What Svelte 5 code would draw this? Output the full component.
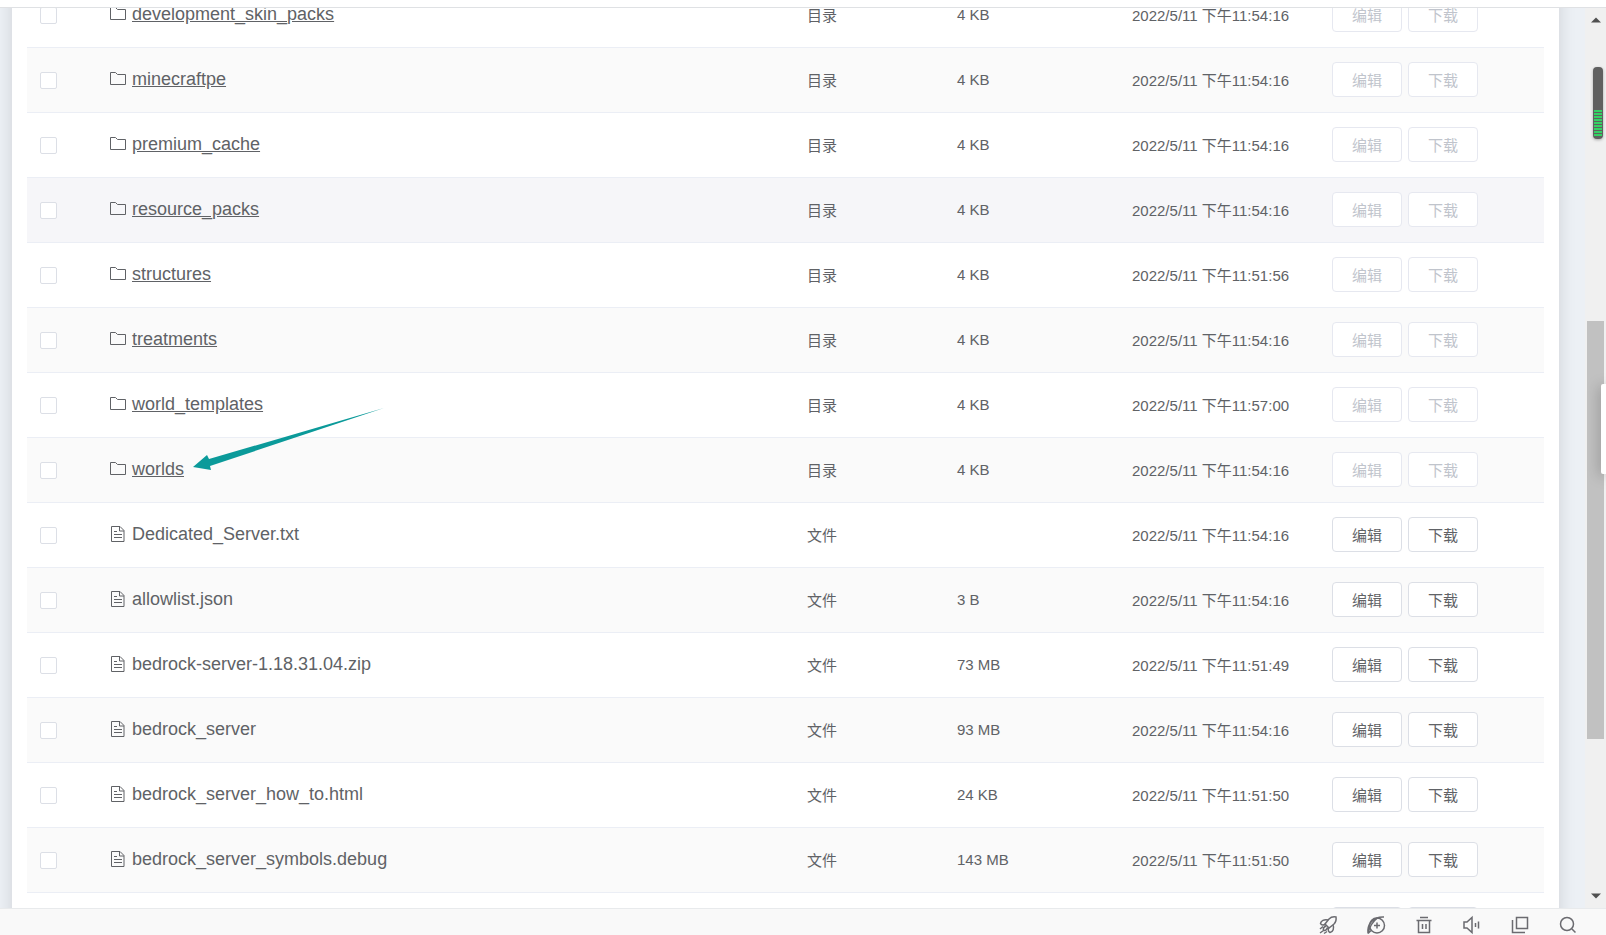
<script>
  const files = [
    { name: 'development_skin_packs', dir: true, size: '4 KB', time: '2022/5/11 下午11:54:16' },
    { name: 'minecraftpe', dir: true, size: '4 KB', time: '2022/5/11 下午11:54:16' },
    { name: 'premium_cache', dir: true, size: '4 KB', time: '2022/5/11 下午11:54:16' },
    { name: 'resource_packs', dir: true, size: '4 KB', time: '2022/5/11 下午11:54:16', active: true },
    { name: 'structures', dir: true, size: '4 KB', time: '2022/5/11 下午11:51:56' },
    { name: 'treatments', dir: true, size: '4 KB', time: '2022/5/11 下午11:54:16' },
    { name: 'world_templates', dir: true, size: '4 KB', time: '2022/5/11 下午11:57:00' },
    { name: 'worlds', dir: true, size: '4 KB', time: '2022/5/11 下午11:54:16' },
    { name: 'Dedicated_Server.txt', size: '', time: '2022/5/11 下午11:54:16' },
    { name: 'allowlist.json', size: '3 B', time: '2022/5/11 下午11:54:16' },
    { name: 'bedrock-server-1.18.31.04.zip', size: '73 MB', time: '2022/5/11 下午11:51:49' },
    { name: 'bedrock_server', size: '93 MB', time: '2022/5/11 下午11:54:16' },
    { name: 'bedrock_server_how_to.html', size: '24 KB', time: '2022/5/11 下午11:51:50' },
    { name: 'bedrock_server_symbols.debug', size: '143 MB', time: '2022/5/11 下午11:51:50' },
    { name: '', size: '', time: '' }
  ];

  let selected = $state([]);
</script>

<div class="window">
  <div class="tabstrip"></div>

  <div class="view">
    <main>
      <div class="card">
        <table>
          <colgroup>
            <col class="c-check" />
            <col />
            <col class="c-type" />
            <col class="c-size" />
            <col class="c-time" />
            <col class="c-ops" />
          </colgroup>
          <tbody>
            {#each files as file}
              <tr class:active={file.active}>
                <td>
                  <input type="checkbox" value={file.name} bind:group={selected} aria-label={file.name || 'file'} />
                </td>
                <td>
                  {#if file.name}
                    <div class="name">
                      {#if file.dir}
                        <svg width="16" height="16" viewBox="0 0 16 16">
                          <path d="M.5 1.500h5l2 2h8v10H.5z" />
                        </svg>
                        <a href="#{file.name}">{file.name}</a>
                      {:else}
                        <svg width="16" height="16" viewBox="0 0 16 16">
                          <path d="M1.500 .5h8.500l4 4v11H1.500zM9.500 .5v4.500H14M4 5.500h3M4 8.500h8M4 11.500h8" />
                        </svg>
                        <span>{file.name}</span>
                      {/if}
                    </div>
                  {/if}
                </td>
                <td>{file.name ? (file.dir ? '目录' : '文件') : ''}</td>
                <td>{file.size}</td>
                <td>{file.time}</td>
                <td>
                  <div class="ops">
                    <button disabled={file.dir} aria-label="编辑">{file.name ? '编辑' : ''}</button>
                    <button disabled={file.dir} aria-label="下载">{file.name ? '下载' : ''}</button>
                  </div>
                </td>
              </tr>
            {/each}
          </tbody>
        </table>
      </div>
    </main>

    <div class="scrollbar">
      <svg width="10" height="6" viewBox="0 0 10 6"><path d="M0 5.500 5 .5l5 5z" /></svg>
      <div class="track"><div class="thumb"></div></div>
      <svg width="10" height="6" viewBox="0 0 10 6"><path d="M0 .5h10l-5 5z" /></svg>
    </div>
  </div>

  <footer>
    <button aria-label="加速">
      <svg width="20" height="20" viewBox="0 0 20 20">
        <path d="M18 2c-3-.5-5 0-7 2L7 9l4 4 5-4c2-2 2.500-4 2-7z" />
        <path d="M10 5C6 4 3 6 2.500 8.500 3.500 11 6 10 7.500 9.500M15 10c1.500 3 0 7-3 7.500-2-1-2-3-1.500-5M8 11c-2 1-3 3-2.500 4.500C8 16 9 14 9.500 12.500M2 14l3-2.500M2 18l3.500-2.500M6 18.500l3-2" />
      </svg>
    </button>
    <button aria-label="浏览器">
      <svg width="20" height="20" viewBox="0 0 20 20">
        <circle cx="11" cy="10.500" r="7.500" />
        <path d="M2 18.500C1 9 7 1.500 18 2M2 18.500c1-5 3.500-11 9.500-15.500M2 18.500l3-3M11 7.500v6M8 10.500h6" />
      </svg>
    </button>
    <button aria-label="清除">
      <svg width="20" height="20" viewBox="0 0 20 20">
        <path d="M6 2.500h8M2.500 5.500h15M4.500 5.500v12h11v-12M8.500 9v5M12 9v5" />
      </svg>
    </button>
    <button aria-label="声音">
      <svg width="20" height="20" viewBox="0 0 20 20">
        <path d="M2 7v6h3l5 4.500v-15L5 7zM13.500 8v4M16.500 6.500v7" />
      </svg>
    </button>
    <button aria-label="窗口">
      <svg width="20" height="20" viewBox="0 0 20 20">
        <path d="M6.500 2.500h11v11h-11zM2.500 5v12.500H15" />
      </svg>
    </button>
    <button aria-label="搜索">
      <svg width="20" height="20" viewBox="0 0 20 20">
        <circle cx="9" cy="9" r="6.500" />
        <path d="m14 14 3.500 3.500" />
      </svg>
    </button>
  </footer>

  <svg class="arrow" width="192" height="64" viewBox="0 0 192 64">
    <path d="M0 60 14 48l2 4L191 1 17 59l1 4z" />
  </svg>

  <div class="meter"><div class="level"></div></div>
  <div class="drawer"></div>
</div>

<style>
  :global(body) {
    margin: 0;
    overflow: hidden;
  }
  .window {
    position: relative;
    display: flex;
    flex-direction: column;
    height: 100vh;
    overflow: hidden;
    font-family: 'Liberation Sans', 'Noto Sans CJK SC', sans-serif;
    font-size: 15px;
    color: #606266;
  }
  svg {
    flex: none;
    fill: none;
    stroke: #606266;
  }
  .tabstrip {
    height: 7px;
    background: #fff;
    border-bottom: 1px solid #dfe1e4;
  }
  .view {
    display: flex;
    flex: 1;
    min-height: 0;
  }
  main {
    flex: 1;
    padding: 0 26px 0 12px;
    overflow: hidden;
    background: #ecf0f5;
  }
  .card {
    padding: 0 15px;
    /* the list is scrolled partway into its first row */
    margin-top: -25px;
    background: #fff;
    box-shadow: 0 0 16px rgba(0, 0, 0, 0.13);
  }
  table {
    width: 100%;
    table-layout: fixed;
    border-collapse: separate;
    border-spacing: 0;
  }
  .c-check {
    width: 70px;
  }
  .c-type {
    width: 150px;
  }
  .c-size {
    width: 175px;
  }
  .c-time {
    width: 200px;
  }
  .c-ops {
    width: 225px;
  }
  td {
    box-sizing: border-box;
    height: 65px;
    padding: 0 13px;
    border-bottom: 1px solid #ebeef5;
    white-space: nowrap;
  }
  td + td {
    padding-bottom: 2px;
  }
  tr:nth-child(even) td {
    background: #fafafa;
  }
  tr.active td {
    background: #f6f6f9;
  }
  input {
    appearance: none;
    display: block;
    width: 17px;
    height: 17px;
    margin: 0;
    background: #fff;
    border: 1px solid #dcdfe6;
    border-radius: 2px;
  }
  input:checked {
    background: #409eff;
  }
  .name {
    display: flex;
    align-items: center;
    gap: 6px;
    font-size: 18px;
  }
  .name a {
    color: inherit;
  }
  .ops {
    display: flex;
    gap: 6px;
  }
  .ops button {
    width: 70px;
    height: 35px;
    padding: 0;
    font: inherit;
    color: #606266;
    background: #fff;
    border: 1px solid #dcdfe6;
    border-radius: 4px;
  }
  .ops button:disabled {
    color: #c0c4cc;
    border-color: #e6e8f0;
  }
  .scrollbar {
    display: flex;
    flex-direction: column;
    align-items: center;
    justify-content: space-between;
    width: 21px;
    padding: 9px 0;
    box-sizing: border-box;
    background: #f0f0f0;
  }
  .scrollbar svg {
    fill: #505050;
    stroke: none;
  }
  .track {
    flex: 1;
    width: 17px;
  }
  .thumb {
    height: 48%;
    margin-top: 298px;
    background: #c1c1c1;
  }
  footer {
    display: flex;
    justify-content: flex-end;
    gap: 28px;
    height: 26px;
    padding: 0 28px 0 0;
    background: #f9f9f9;
    border-top: 1px solid #e8eaec;
  }
  footer button {
    padding: 5px 0 0;
    height: 26px;
    background: none;
    border: none;
  }
  footer svg {
    display: block;
    stroke: #6b6b70;
    stroke-width: 1.5;
  }
  .arrow {
    position: absolute;
    left: 193px;
    top: 407px;
    fill: #0b9a9a;
    stroke: none;
  }
  .meter {
    position: absolute;
    top: 67px;
    right: 3px;
    display: flex;
    align-items: flex-end;
    width: 10px;
    height: 72px;
    padding: 0 1px 2px;
    box-sizing: border-box;
    background: #606060;
    border-radius: 4px;
    box-shadow: 0 1px 3px rgba(0, 0, 0, 0.3);
  }
  .level {
    width: 100%;
    height: 27px;
    background: repeating-linear-gradient(#33d163 0 2px, #606060 2px 3px);
  }
  .drawer {
    position: absolute;
    top: 384px;
    right: 0;
    width: 5px;
    height: 90px;
    background: #fff;
    border-radius: 2px 0 0 2px;
    box-shadow: 0 2px 14px rgba(0, 0, 0, 0.4);
  }
</style>
